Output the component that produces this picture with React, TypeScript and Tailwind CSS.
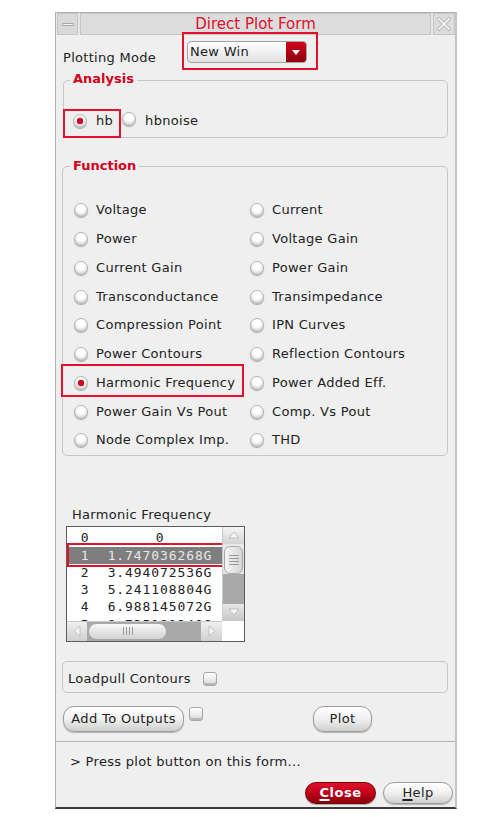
import React from "react";

const leftCol = [
  "Voltage",
  "Power",
  "Current Gain",
  "Transconductance",
  "Compression Point",
  "Power Contours",
  "Harmonic Frequency",
  "Power Gain Vs Pout",
  "Node Complex Imp.",
];
const rightCol = [
  "Current",
  "Voltage Gain",
  "Power Gain",
  "Transimpedance",
  "IPN Curves",
  "Reflection Contours",
  "Power Added Eff.",
  "Comp. Vs Pout",
  "THD",
];

const harmonics = [
  ["0", "0"],
  ["1", "1.747036268G"],
  ["2", "3.494072536G"],
  ["3", "5.241108804G"],
  ["4", "6.988145072G"],
  ["5", "8.735181340G"],
];

function Radio({ checked }: { checked?: boolean }) {
  return (
    <span className="inline-flex h-[14px] w-[14px] shrink-0 items-center justify-center rounded-full border border-[#b6b6b6] bg-[radial-gradient(circle_at_50%_35%,#ffffff_38%,#dcdcdc_70%,#8e8e8e_100%)] shadow-[0_1px_1px_rgba(0,0,0,0.3)]">
      {checked && (
        <span className="h-[6px] w-[6px] rounded-full bg-[#d8001c] shadow-[0_0_1px_#700]" />
      )}
    </span>
  );
}

function Check({ className }: { className?: string }) {
  return (
    <span
      className={
        "inline-block h-[14px] w-[14px] shrink-0 rounded-[3px] border border-[#a8a8a8] bg-gradient-to-b from-white to-[#dadada] shadow-[inset_0_-2px_1px_rgba(0,0,0,0.18)] " +
        (className ?? "")
      }
    />
  );
}

function Tri({ dir }: { dir: "up" | "down" | "left" | "right" }) {
  const pts = {
    up: "1,9 6,3 11,9",
    down: "1,3 6,9 11,3",
    left: "9,1 3,6 9,11",
    right: "3,1 9,6 3,11",
  }[dir];
  return (
    <svg width="12" height="12" viewBox="0 0 12 12">
      <polygon points={pts} fill="#f4f4f4" stroke="#b8b8b8" strokeWidth="0.8" />
    </svg>
  );
}

function Btn({ children, className }: { children: React.ReactNode; className?: string }) {
  return (
    <button
      className={
        "flex items-center justify-center rounded-[11px] border border-[#9c9c9c] bg-gradient-to-b from-white via-[#f0f0f0] to-[#cfcfcf] text-[13px] tracking-[0.4px] text-[#222] shadow-[0_1px_1px_rgba(0,0,0,0.25)] " +
        (className ?? "")
      }
    >
      {children}
    </button>
  );
}

export default function App() {
  return (
    <div className="h-[817px] w-[496px] overflow-hidden bg-white font-['DejaVu_Sans',sans-serif] text-[13px] leading-4 tracking-[0.3px] text-[#222]">
      <div className="ml-[55px] mt-[12px] flex w-[402px] flex-col border border-r-2 border-b-2 border-[#b0b0b0] border-r-[#c4c4c4] border-b-[#3c3c3c] bg-[#efefef] pb-[3px]">
        {/* title bar */}
        <div className="flex h-[22px] items-stretch gap-[2px] bg-[#e6e6e6] pl-px">
          <div className="flex w-[21px] items-center justify-center border border-[#c6c6c6] bg-[#d9d9d9]">
            <span className="h-[3px] w-[12px] rounded-[1px] border border-[#a6a6a6] bg-[#f4f4f4]" />
          </div>
          <div className="flex flex-1 items-center justify-center border border-[#c6c6c6] bg-[#dcdcdc] text-[15px] tracking-normal text-[#e0102a]">
            Direct Plot Form
          </div>
          <div className="flex w-[22px] items-center justify-center border border-[#c6c6c6] bg-[#dcdcdc]">
            <svg width="14" height="14" viewBox="0 0 14 14">
              <path d="M2 2 L12 12 M12 2 L2 12" stroke="#b0b0b0" strokeWidth="3.4" strokeLinecap="round" />
              <path d="M2 2 L12 12 M12 2 L2 12" stroke="#f2f2f2" strokeWidth="1.8" strokeLinecap="round" />
            </svg>
          </div>
        </div>

        {/* plotting mode */}
        <div className="flex h-[45px] items-start pl-[7px]">
          <span className="mt-[15px] w-[124px]">Plotting Mode</span>
          <div className="relative mt-[6px] flex h-[22px] w-[120px] items-stretch rounded-[4px] border border-[#a4a4a4] bg-gradient-to-b from-white to-[#e2e2e2]">
            <span className="flex flex-1 items-center pl-[2px]">New Win</span>
            <span className="flex w-[20px] items-center justify-center rounded-r-[3px] bg-gradient-to-b from-[#d2001c] to-[#8e000e]">
              <svg width="8" height="5" viewBox="0 0 8 5">
                <polygon points="0,0 8,0 4,5" fill="#fff" />
              </svg>
            </span>
            <span className="absolute left-[-6px] top-[-10px] h-[38px] w-[136px] border-2 border-[#e3122c]" />
          </div>
        </div>

        {/* analysis */}
        <div className="relative ml-[7px] w-[385px] rounded-[5px] border border-[#c6c6c6] pb-[8px] pt-[32px]">
          <span className="absolute left-[6px] top-[-10px] bg-[#efefef] px-[3px] font-bold tracking-normal text-[#d4001c]">
            Analysis
          </span>
          <div className="flex h-4 items-center pl-[9px]">
            <Radio checked />
            <span className="ml-[9px]">hb</span>
            <span className="ml-[9px]">
              <Radio />
            </span>
            <span className="ml-[9px]">hbnoise</span>
          </div>
          <span className="absolute left-[-1px] top-[28px] h-[29px] w-[58px] border-2 border-[#e3122c]" />
        </div>

        {/* function */}
        <div className="relative ml-[6px] mt-[28px] w-[386px] rounded-[5px] border border-[#c6c6c6] pl-[11px] pt-[29px]">
          <span className="absolute left-[7px] top-[-9px] bg-[#efefef] px-[3px] font-bold tracking-normal text-[#d4001c]">
            Function
          </span>
          <div className="grid grid-cols-[176px_1fr]">
            {leftCol.map((l, i) => (
              <React.Fragment key={l}>
                <div className="flex h-[28.75px] items-center gap-[8px]">
                  <Radio checked={i === 6} />
                  <span>{l}</span>
                </div>
                <div className="flex h-[28.75px] items-center gap-[8px]">
                  <Radio />
                  <span>{rightCol[i]}</span>
                </div>
              </React.Fragment>
            ))}
          </div>
          <span className="absolute left-[-2px] top-[197px] h-[33px] w-[183px] border-2 border-[#e3122c]" />
        </div>

        {/* harmonic list */}
        <span className="ml-[16px] mt-[51px]">Harmonic Frequency</span>
        <div className="ml-[10px] mt-[3px] flex h-[116px] w-[179px] flex-col border border-[#5c5c5c] bg-white">
          <div className="flex h-[94px]">
            <div className="relative w-[155px] overflow-hidden pt-[3px] font-['DejaVu_Sans_Mono',monospace] text-[13px] tracking-[0.9px]">
              {harmonics.map(([n, v], i) => (
                <div
                  key={n}
                  className={
                    "flex h-[17.25px] items-center " +
                    (i === 1 ? "bg-[#7e7e7e] text-[#e8e8e8]" : "text-[#222]")
                  }
                >
                  <span className="w-[36px] text-center">{n}</span>
                  <span className="w-[114px] text-center">{v}</span>
                </div>
              ))}
              <span className="absolute left-0 top-[16px] h-[24px] w-[164px] border-2 border-[#e3122c]" />
            </div>
            <div className="flex w-[22px] flex-col border-l border-[#c8c8c8] bg-[#e8e8e8]">
              <div className="flex h-[17px] items-center justify-center bg-gradient-to-b from-[#f4f4f4] to-[#d4d4d4]">
                <Tri dir="up" />
              </div>
              <div className="mx-px mt-[2px] flex h-[28px] flex-col items-center justify-center gap-[2px] rounded-[6px] border border-[#a8a8a8] bg-gradient-to-r from-[#f6f6f6] to-[#d6d6d6]">
                <span className="h-px w-[10px] bg-[#9a9a9a]" />
                <span className="h-px w-[10px] bg-[#9a9a9a]" />
                <span className="h-px w-[10px] bg-[#9a9a9a]" />
                <span className="h-px w-[10px] bg-[#9a9a9a]" />
              </div>
              <div className="flex-1 bg-[#a9a9a9]" />
              <div className="flex h-[17px] items-center justify-center bg-gradient-to-b from-[#e8e8e8] to-[#c6c6c6]">
                <Tri dir="down" />
              </div>
            </div>
          </div>
          <div className="flex h-[20px]">
            <div className="flex w-[155px] items-stretch border-t border-[#c8c8c8] bg-[#a9a9a9]">
              <div className="flex w-[20px] items-center justify-center bg-gradient-to-b from-[#f0f0f0] to-[#d0d0d0]">
                <Tri dir="left" />
              </div>
              <div className="my-px ml-px flex w-[79px] items-center justify-center gap-[2px] rounded-[9px] border border-[#a8a8a8] bg-gradient-to-b from-[#f8f8f8] to-[#d2d2d2]">
                <span className="h-[8px] w-px bg-[#9a9a9a]" />
                <span className="h-[8px] w-px bg-[#9a9a9a]" />
                <span className="h-[8px] w-px bg-[#9a9a9a]" />
                <span className="h-[8px] w-px bg-[#9a9a9a]" />
              </div>
              <div className="flex-1" />
              <div className="flex w-[21px] items-center justify-center bg-gradient-to-b from-[#f0f0f0] to-[#d0d0d0]">
                <Tri dir="right" />
              </div>
            </div>
            <div className="flex-1 bg-white" />
          </div>
        </div>

        {/* loadpull */}
        <div className="ml-[6px] mt-[19px] flex h-[32px] w-[386px] items-center rounded-[5px] border border-[#c6c6c6] pl-[5px] pt-[4px]">
          <span>Loadpull Contours</span>
          <Check className="ml-[12px]" />
        </div>

        {/* action buttons */}
        <div className="ml-[7px] mt-[13px] flex h-[26px] items-start">
          <Btn className="h-[26px] w-[121px]">Add To Outputs</Btn>
          <Check className="ml-[5px] mt-px" />
          <Btn className="ml-[110px] h-[26px] w-[59px]">Plot</Btn>
        </div>

        <div className="mt-[9px] h-px bg-[#b4b4b4]" />

        <span className="ml-[14px] mt-[12px]">&gt; Press plot button on this form...</span>

        <div className="mt-[12px] flex justify-end gap-[7px] pr-[2px]">
          <button className="flex h-[22px] w-[71px] items-center justify-center rounded-[11px] border border-[#7a0008] bg-gradient-to-b from-[#e0102a] via-[#c0001a] to-[#8a000c] text-[13px] font-bold tracking-[0.5px] text-white shadow-[0_1px_1px_rgba(0,0,0,0.3)]">
            <span className="underline decoration-2 underline-offset-2">C</span>lose
          </button>
          <Btn className="h-[22px] w-[70px]">
            <span className="underline decoration-2 underline-offset-2">H</span>elp
          </Btn>
        </div>
      </div>
    </div>
  );
}
